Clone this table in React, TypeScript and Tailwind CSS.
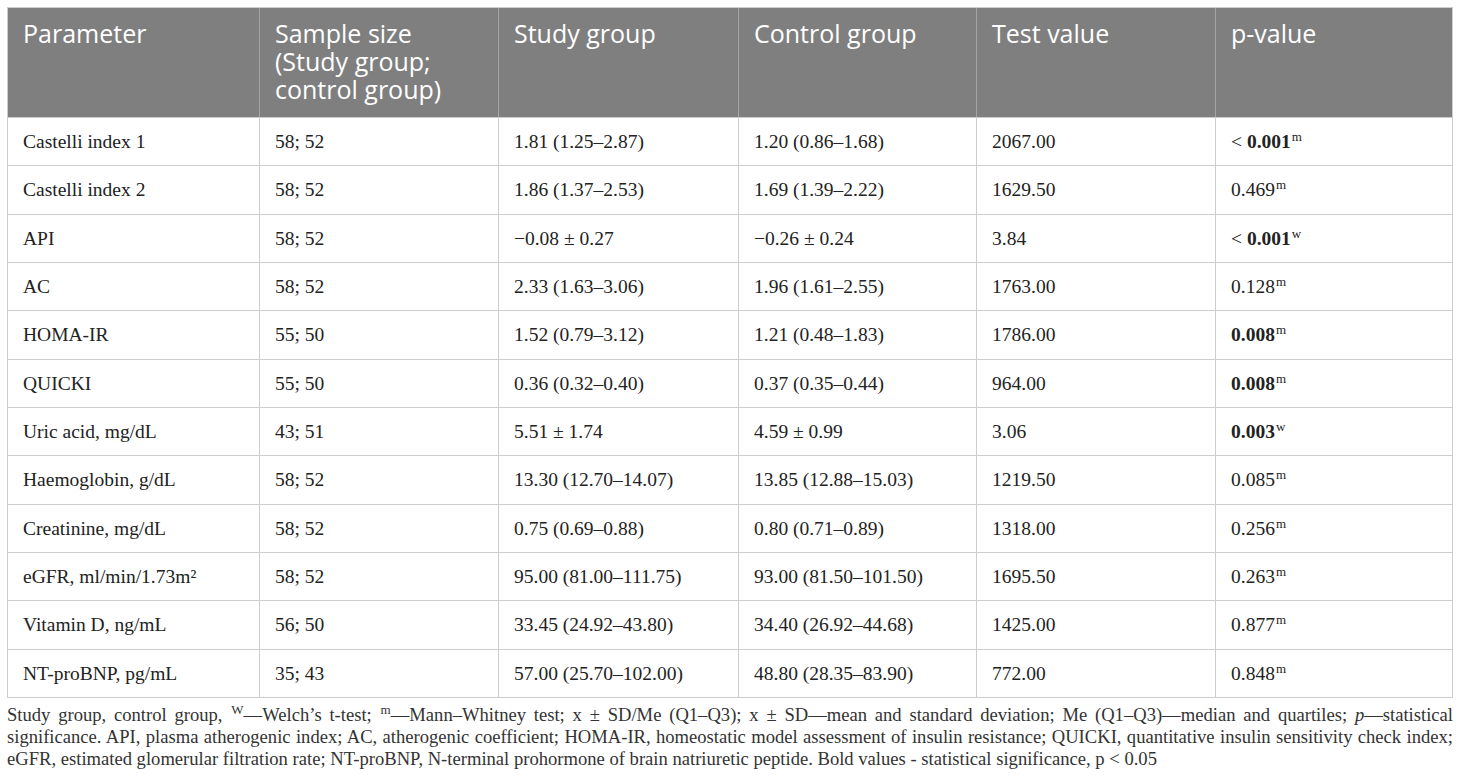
import React from "react";

type Row = {
  name: React.ReactNode;
  size: string;
  study: string;
  control: string;
  test: string;
  p: string;
  bold?: boolean;
  lt?: boolean;
  sup: string;
};

const ROWS: Row[] = [
  { name: "Castelli index 1", size: "58; 52", study: "1.81 (1.25–2.87)", control: "1.20 (0.86–1.68)", test: "2067.00", p: "0.001", bold: true, lt: true, sup: "m" },
  { name: "Castelli index 2", size: "58; 52", study: "1.86 (1.37–2.53)", control: "1.69 (1.39–2.22)", test: "1629.50", p: "0.469", sup: "m" },
  { name: "API", size: "58; 52", study: "−0.08 ± 0.27", control: "−0.26 ± 0.24", test: "3.84", p: "0.001", bold: true, lt: true, sup: "w" },
  { name: "AC", size: "58; 52", study: "2.33 (1.63–3.06)", control: "1.96 (1.61–2.55)", test: "1763.00", p: "0.128", sup: "m" },
  { name: "HOMA-IR", size: "55; 50", study: "1.52 (0.79–3.12)", control: "1.21 (0.48–1.83)", test: "1786.00", p: "0.008", bold: true, sup: "m" },
  { name: "QUICKI", size: "55; 50", study: "0.36 (0.32–0.40)", control: "0.37 (0.35–0.44)", test: "964.00", p: "0.008", bold: true, sup: "m" },
  { name: "Uric acid, mg/dL", size: "43; 51", study: "5.51 ± 1.74", control: "4.59 ± 0.99", test: "3.06", p: "0.003", bold: true, sup: "w" },
  { name: "Haemoglobin, g/dL", size: "58; 52", study: "13.30 (12.70–14.07)", control: "13.85 (12.88–15.03)", test: "1219.50", p: "0.085", sup: "m" },
  { name: "Creatinine, mg/dL", size: "58; 52", study: "0.75 (0.69–0.88)", control: "0.80 (0.71–0.89)", test: "1318.00", p: "0.256", sup: "m" },
  { name: <>eGFR, ml/min/1.73m²</>, size: "58; 52", study: "95.00 (81.00–111.75)", control: "93.00 (81.50–101.50)", test: "1695.50", p: "0.263", sup: "m" },
  { name: "Vitamin D, ng/mL", size: "56; 50", study: "33.45 (24.92–43.80)", control: "34.40 (26.92–44.68)", test: "1425.00", p: "0.877", sup: "m" },
  { name: "NT-proBNP, pg/mL", size: "35; 43", study: "57.00 (25.70–102.00)", control: "48.80 (28.35–83.90)", test: "772.00", p: "0.848", sup: "m" },
];

const COLS = "grid grid-cols-[251px_239px_240px_238px_239px_238px]";
const serif = "font-['Liberation_Serif','Times_New_Roman',serif]";

const Sup = ({ t }: { t: string }) => (
  <span className="text-[13px] font-normal relative -top-[7px] ml-[1px] leading-none">{t}</span>
);

const App = () => {
  const heads = ["Parameter", "Sample size (Study group; control group)", "Study group", "Control group", "Test value", "p-value"];

  return (
    <div className="w-[1460px] h-[784px] bg-white pt-[7px] px-[7px] overflow-hidden">
      <div className="border border-[#cdcdcd] w-[1446px]">
        <div className={`${COLS} bg-[#7f7f7f] h-[109px]`}>
          {heads.map((h, i) => (
            <div
              key={i}
              className={`pl-[15px] pr-[12px] pt-[11px] text-white text-[25px] leading-[28px] font-['Open_Sans',sans-serif] ${i > 0 ? "border-l border-[#a5a5a5]" : ""} ${i === 1 ? "pr-[20px]" : ""}`}
            >
              {h}
            </div>
          ))}
        </div>
        {ROWS.map((r, index) => (
          <div key={index} className={`${COLS} h-[48.33px] border-t border-[#cdcdcd] text-[19.5px] text-[#222] ${serif}`}>
            <div className="pl-[15px] flex items-center">{r.name}</div>
            <div className="pl-[15px] flex items-center border-l border-[#cdcdcd]">{r.size}</div>
            <div className="pl-[15px] flex items-center border-l border-[#cdcdcd]">{r.study}</div>
            <div className="pl-[15px] flex items-center border-l border-[#cdcdcd]">{r.control}</div>
            <div className="pl-[15px] flex items-center border-l border-[#cdcdcd]">{r.test}</div>
            <div className="pl-[15px] flex items-center border-l border-[#cdcdcd]">
              <span>
                {r.lt ? "< " : ""}
                <span className={r.bold ? "font-bold" : ""}>{r.p}</span>
                <Sup t={r.sup} />
              </span>
            </div>
          </div>
        ))}
      </div>
      <div className={`w-[1446px] mt-[6px] text-[18.6px] leading-[22px] text-[#333] ${serif}`}>
        <div className="text-justify [text-align-last:justify] whitespace-nowrap">
          Study group, control group, <Sup t="W" />—Welch’s t-test; <Sup t="m" />—Mann–Whitney test; x ± SD/Me (Q1–Q3); x ± SD—mean and standard deviation; Me (Q1–Q3)—median and quartiles; <i>p</i>—statistical
        </div>
        <div className="text-justify [text-align-last:justify] whitespace-nowrap">
          significance. API, plasma atherogenic index; AC, atherogenic coefficient; HOMA-IR, homeostatic model assessment of insulin resistance; QUICKI, quantitative insulin sensitivity check index;
        </div>
        <div className="whitespace-nowrap">
          eGFR, estimated glomerular filtration rate; NT-proBNP, N-terminal prohormone of brain natriuretic peptide. Bold values - statistical significance, p &lt; 0.05
        </div>
      </div>
    </div>
  );
};

export default App;
